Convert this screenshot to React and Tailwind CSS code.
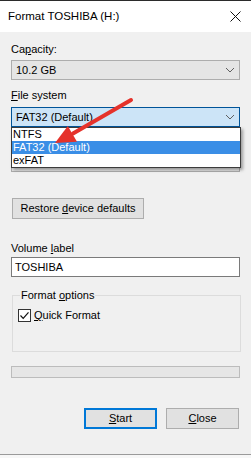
import React from 'react';

const font = { fontFamily: '"Liberation Sans", Arial, sans-serif' };

const Chevron = () => (
  <svg width="10" height="6" viewBox="0 0 10 6" className="shrink-0">
    <path d="M1 1 L5 5 L9 1" fill="none" stroke="#606060" strokeWidth="1" />
  </svg>
);

const U = ({ children }) => <span className="underline underline-offset-[1px]">{children}</span>;

const Button = ({ children, primary, className = '' }) => (
  <div
    className={`h-[21px] flex items-center justify-center bg-[#e1e1e1] text-[11px] text-black ${
      primary ? 'border-2 border-[#0078d7]' : 'border border-[#adadad]'
    } ${className}`}
  >
    <span>{children}</span>
  </div>
);

export default function App() {
  return (
    <div
      className="relative w-[251px] h-[458px] bg-[#f0f0f0] border-t border-[#2b2b2b] flex flex-col overflow-hidden text-black"
      style={font}
    >
      {/* Title bar */}
      <div className="h-[31px] bg-white flex items-center justify-between pl-[8px] pr-[10px] shrink-0">
        <span className="text-[11.5px]">Format TOSHIBA (H:)</span>
        <svg width="11" height="11" viewBox="0 0 11 11">
          <path d="M0.5 0.5 L10.5 10.5 M10.5 0.5 L0.5 10.5" stroke="#111" strokeWidth="1" />
        </svg>
      </div>

      <div className="px-[11px] flex flex-col text-[11px] leading-[15px]">
        <div className="mt-[10px]">
          Ca<U>p</U>acity:
        </div>
        <div className="mt-[3px] h-[20px] bg-[#e5e5e5] border border-[#adadad] flex items-center justify-between pl-[4px] pr-[4px]">
          <span>10.2 GB</span>
          <Chevron />
        </div>

        <div className="mt-[8px]">
          <U>F</U>ile system
        </div>
        <div className="relative mt-[4px]">
          <div className="h-[20px] bg-[#cce4f7] border border-[#005499] flex items-center justify-between pl-[4px] pr-[4px]">
            <span>FAT32 (Default)</span>
            <Chevron />
          </div>
          {/* open dropdown list */}
          <div className="absolute z-10 left-0 top-[20px] w-[230px] bg-white border border-[#3c3c3c] shadow-[2px_2px_3px_rgba(0,0,0,0.35)]">
            <div className="h-[13px] leading-[13px] pl-[1px]">NTFS</div>
            <div className="h-[13px] leading-[13px] pl-[1px] bg-[#3a8ee6] text-white">FAT32 (Default)</div>
            <div className="h-[13px] leading-[13px] pl-[1px]">exFAT</div>
          </div>
        </div>

        {/* allocation unit size row, hidden behind the open list */}
        <div className="mt-[7px] h-[15px]" />
        <div className="mt-[3px] h-[20px] bg-[#e5e5e5] border border-[#adadad]" />

        <Button className="mt-[26px] ml-[1px] w-[132px] h-[20px]">
          Restore <U>d</U>evice defaults
        </Button>

        <div className="mt-[22px]">
          Volume <U>l</U>abel
        </div>
        <div className="mt-[1px] h-[20px] bg-white border border-[#7a7a7a] flex items-center pl-[3px]">
          TOSHIBA
        </div>

        {/* Format options group */}
        <div className="relative mt-[18px] ml-[1px] w-[229px] h-[57px] border border-[#dcdcdc]">
          <div className="absolute -top-[8px] left-[7px] px-[1px] bg-[#f0f0f0]">
            Format <U>o</U>ptions
          </div>
          <div className="flex items-center pl-[5px] pt-[12px]">
            <div className="w-[13px] h-[13px] bg-white border border-[#333] flex items-center justify-center">
              <svg width="11" height="11" viewBox="0 0 11 11">
                <path d="M1.5 5.5 L4.2 8.3 L9.5 2.3" fill="none" stroke="#111" strokeWidth="1.2" />
              </svg>
            </div>
            <span className="ml-[3px]">
              <U>Q</U>uick Format
            </span>
          </div>
        </div>

        {/* progress bar */}
        <div className="mt-[14px] h-[12px] bg-[#e6e6e6] border border-[#bcbcbc]" />

        <div className="mt-[30px] flex justify-end gap-[9px] pr-[1px]">
          <Button primary className="w-[73px]">
            <U>S</U>tart
          </Button>
          <Button className="w-[73px]">
            <U>C</U>lose
          </Button>
        </div>
      </div>

      <div className="flex-1" />
      <div className="h-[4px] border-t border-[#9a9a9a] bg-[#f7f7f7] shrink-0" />

      {/* red annotation arrow */}
      <svg className="absolute left-0 top-0 z-20 pointer-events-none" width="251" height="458" viewBox="0 0 251 458">
        <line x1="131" y1="99" x2="73" y2="132.5" stroke="#e5322b" strokeWidth="4" strokeLinecap="round" />
        <polygon points="55,142 77,140.7 67.8,125.1" fill="#e5322b" />
      </svg>
    </div>
  );
}
